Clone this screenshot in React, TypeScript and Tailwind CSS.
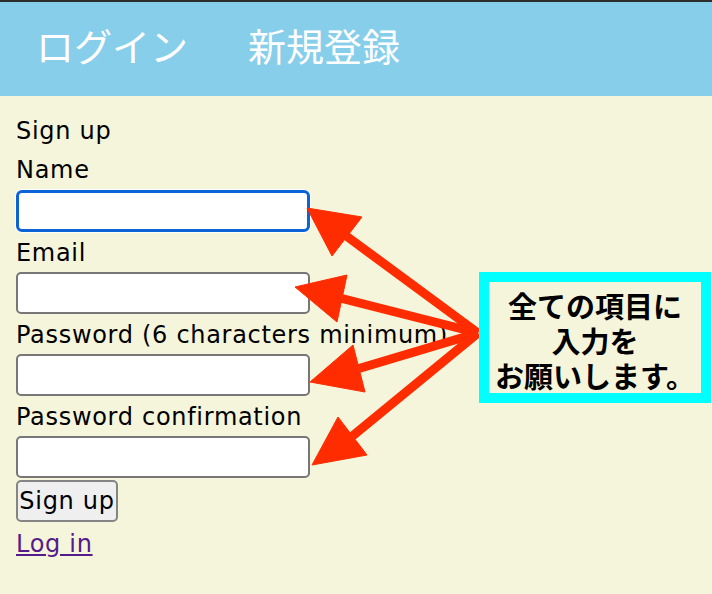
import React from "react";

const jp = { fontFamily: '"Noto Sans CJK JP", "Noto Sans", sans-serif' };
const lat = { fontFamily: '"DejaVu Sans", "Noto Sans CJK JP", sans-serif', letterSpacing: "0.7px" };

function Arrows() {
  const src: [number, number] = [478, 333];
  const arrows = [
    { tip: [307, 208], b1: [362, 217], b2: [332, 256] },
    { tip: [295, 287], b1: [347, 275], b2: [337, 322] },
    { tip: [310, 382], b1: [353, 345], b2: [365, 392] },
    { tip: [312, 465], b1: [338, 417], b2: [367, 455] },
  ];
  return (
    <svg className="absolute left-0 top-0 pointer-events-none" width={712} height={594} viewBox="0 0 712 594">
      {arrows.map((a, i) => {
        const mx = (a.b1[0] + a.b2[0]) / 2;
        const my = (a.b1[1] + a.b2[1]) / 2;
        return (
          <g key={i} fill="#ff2c00" stroke="#ff2c00">
            <line x1={src[0]} y1={src[1]} x2={mx} y2={my} strokeWidth={9} />
            <polygon points={`${a.tip[0]},${a.tip[1]} ${a.b1[0]},${a.b1[1]} ${a.b2[0]},${a.b2[1]}`} strokeWidth={1} strokeLinejoin="miter" />
          </g>
        );
      })}
    </svg>
  );
}

function Input({ focused }: { focused?: boolean }) {
  return focused ? (
    <div className="w-[294px] h-[42px] bg-white rounded-[6px] border-[3px] border-[#0b63d6] shadow-[0_0_0_1px_#ffffff]" />
  ) : (
    <div className="w-[294px] h-[42px] bg-white rounded-[5px] border-2 border-[#777777]" />
  );
}

function Label({ children }: { children: React.ReactNode }) {
  return (
    <div className="h-[40px] leading-[42px] text-[24px] text-black whitespace-nowrap" style={lat}>
      {children}
    </div>
  );
}

export default function App() {
  return (
    <div className="relative w-[712px] h-[594px] bg-[#f5f5dc] overflow-hidden">
      <header className="h-[96px] border-t-2 border-[#2e2e2e] bg-[#87ceeb] flex items-center pl-[36px] gap-[60px] pb-[8px]" style={jp}>
        <span className="text-white text-[38px] leading-none">ログイン</span>
        <span className="text-white text-[38px] leading-none">新規登録</span>
      </header>
      <main className="pl-[16px] pt-[15px] flex flex-col items-start">
        <div className="h-[38px] leading-[40px] text-[24px] text-black whitespace-nowrap" style={lat}>Sign up</div>
        <Label>Name</Label>
        <div className="mt-[1px]">
          <Input focused />
        </div>
        <Label>Email</Label>
        <Input />
        <Label>Password (6 characters minimum)</Label>
        <Input />
        <Label>Password confirmation</Label>
        <Input />
        <button
          className="mt-[2px] h-[42px] w-[102px] bg-[#efefef] border-2 border-[#858585] rounded-[5px] text-[24px] text-black leading-none px-0 whitespace-nowrap"
          style={lat}
        >
          Sign up
        </button>
        <a href="#" className="h-[40px] leading-[44px] text-[24px] text-[#551a8b] underline" style={lat}>
          Log in
        </a>
      </main>
      <Arrows />
      <div className="absolute left-[479px] top-[272px] w-[232px] h-[131px] border-[10px] border-[#00ffff] bg-[#f5f5dc] flex flex-col items-center justify-center pt-[5px]">
        <div className="text-[29px] font-bold text-black leading-[35px] text-center whitespace-nowrap" style={jp}>
          全ての項目に<br />入力を<br />お願いします。
        </div>
      </div>
    </div>
  );
}
